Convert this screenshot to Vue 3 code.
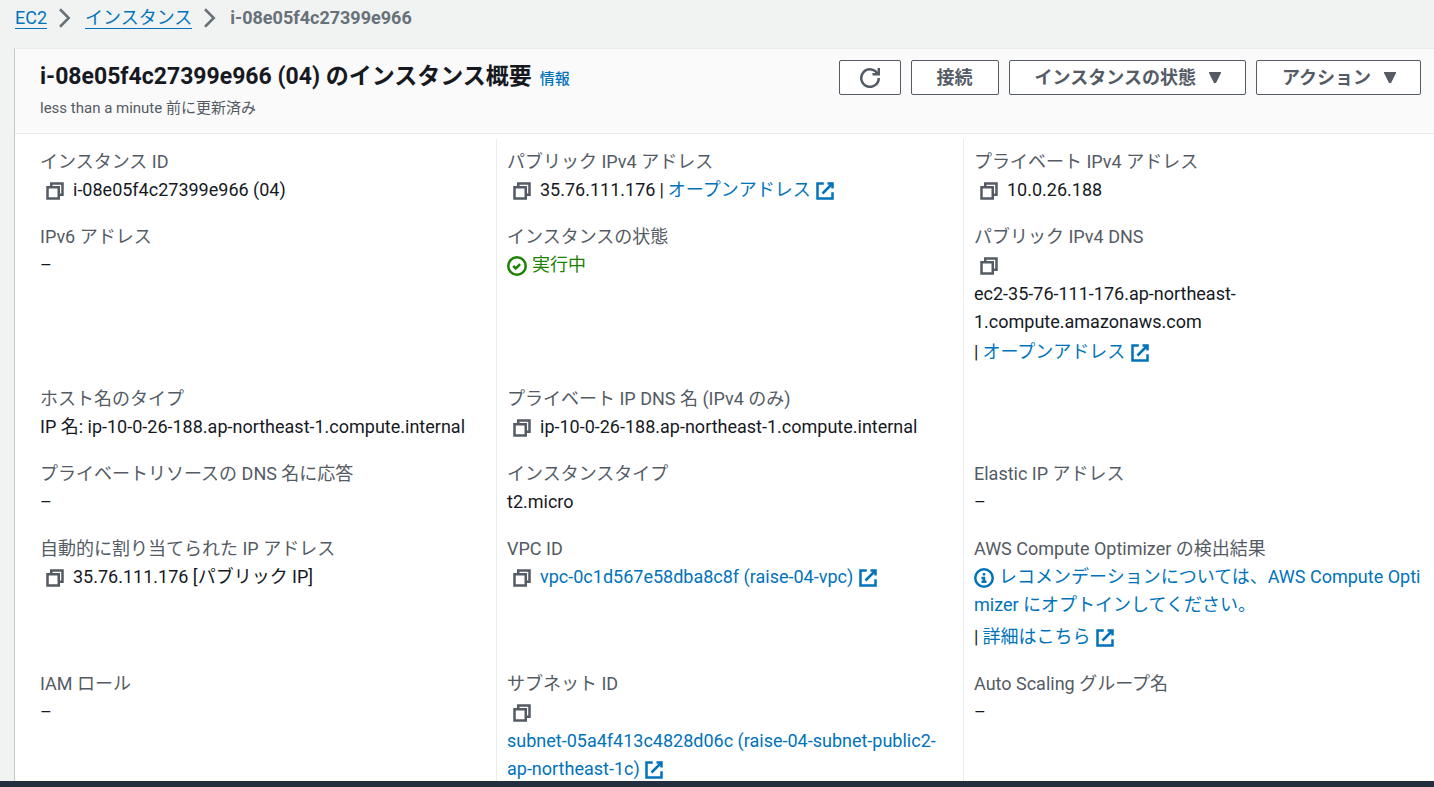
<script setup>
import { h } from 'vue'

const shapes = {
  copy: ['M2 5h9v9H2z', 'M5 5V2h9v9h-3'],
  external: ['M10 2h4v4', 'M6 10l8-8', 'M14 9.05V14H2V2h5'],
  check: ['M8 1a7 7 0 1 1 0 14A7 7 0 0 1 8 1z', 'M5 8l2 2 3.5-3.5'],
  info: ['M8 1a7 7 0 1 1 0 14A7 7 0 0 1 8 1z', 'M8 11V8H6', 'M10 11H6', 'M8 6V4'],
  refresh: ['M10 5h5V0', 'M15 8a7 7 0 1 1-.7-3'],
  chevron: ['M4 1l7 7-7 7'],
}

const Icon = (props) =>
  h(
    'svg',
    { viewBox: '0 0 16 16', width: 20, height: 20, 'aria-hidden': 'true', fill: 'none', stroke: 'currentColor', 'stroke-width': 2 },
    shapes[props.name].map((d) => h('path', { d })),
  )
Icon.props = ['name']

const fields = [
  { label: 'インスタンス ID', copy: true, text: 'i-08e05f4c27399e966 (04)' },
  { label: 'パブリック IPv4 アドレス', copy: true, text: '35.76.111.176', bar: true, link: 'オープンアドレス' },
  { label: 'プライベート IPv4 アドレス', copy: true, text: '10.0.26.188' },

  { label: 'IPv6 アドレス', text: '–' },
  { label: 'インスタンスの状態', status: '実行中' },
  {
    label: 'パブリック IPv4 DNS',
    copy: true,
    stacked: true,
    lines: ['ec2-35-76-111-176.ap-northeast-', '1.compute.amazonaws.com'],
    more: 'オープンアドレス',
  },

  { label: 'ホスト名のタイプ', text: 'IP 名: ip-10-0-26-188.ap-northeast-1.compute.internal' },
  { label: 'プライベート IP DNS 名 (IPv4 のみ)', copy: true, text: 'ip-10-0-26-188.ap-northeast-1.compute.internal' },
  {},

  { label: 'プライベートリソースの DNS 名に応答', text: '–' },
  { label: 'インスタンスタイプ', text: 't2.micro' },
  { label: 'Elastic IP アドレス', text: '–' },

  { label: '自動的に割り当てられた IP アドレス', copy: true, text: '35.76.111.176 [パブリック IP]' },
  { label: 'VPC ID', copy: true, link: 'vpc-0c1d567e58dba8c8f (raise-04-vpc)' },
  {
    label: 'AWS Compute Optimizer の検出結果',
    notice: ['レコメンデーションについては、AWS Compute Opti', 'mizer にオプトインしてください。'],
    more: '詳細はこちら',
  },

  { label: 'IAM ロール', text: '–' },
  {
    label: 'サブネット ID',
    copy: true,
    stacked: true,
    linkLines: ['subnet-05a4f413c4828d06c (raise-04-subnet-public2-', 'ap-northeast-1c)'],
  },
  { label: 'Auto Scaling グループ名', text: '–' },
]
</script>

<template>
  <div class="page">
    <nav class="crumbs" aria-label="パンくずリスト">
      <a href="#">EC2</a>
      <Icon name="chevron" class="sep" />
      <a href="#">インスタンス</a>
      <Icon name="chevron" class="sep" />
      <span class="current">i-08e05f4c27399e966</span>
    </nav>

    <main class="panel">
      <header class="head">
        <div>
          <div class="title">
            <h1>i-08e05f4c27399e966 (04) のインスタンス概要</h1>
            <a href="#" class="hint">情報</a>
          </div>
          <p class="updated">less than a minute 前に更新済み</p>
        </div>
        <div class="actions">
          <button type="button" class="icon-only" aria-label="更新"><Icon name="refresh" /></button>
          <button type="button">接続</button>
          <button type="button" class="menu">
            インスタンスの状態
            <svg class="caret" viewBox="0 0 12 12" aria-hidden="true"><path d="M0 0h12v1L7 11H5L0 1z" /></svg>
          </button>
          <button type="button" class="menu">
            アクション
            <svg class="caret" viewBox="0 0 12 12" aria-hidden="true"><path d="M0 0h12v1L7 11H5L0 1z" /></svg>
          </button>
        </div>
      </header>

      <dl class="grid">
        <div v-for="(f, i) in fields" :key="i" class="cell">
          <dt v-if="f.label">{{ f.label }}</dt>
          <dd v-if="f.label">
            <div class="line" :class="{ stacked: f.stacked, notice: f.notice }">
              <button v-if="f.copy" type="button" class="copy" aria-label="コピー"><Icon name="copy" /></button>
              <span v-if="f.text">{{ f.text }}</span>
              <span v-if="f.bar" class="bar">|</span>
              <a v-if="f.link" href="#">{{ f.link }} <Icon name="external" class="ext" /></a>
              <span v-if="f.status" class="status"><Icon name="check" class="mark" />{{ f.status }}</span>
              <a v-if="f.notice" href="#"><Icon name="info" class="mark" />{{ f.notice[0] }}<br />{{ f.notice[1] }}</a>
            </div>
            <div v-for="t in f.lines" :key="t" class="line">{{ t }}</div>
            <div v-if="f.linkLines" class="line">
              <a href="#">{{ f.linkLines[0] }}<br />{{ f.linkLines[1] }} <Icon name="external" class="ext" /></a>
            </div>
            <div v-if="f.more" class="line more">
              <span class="bar">|</span>
              <a href="#">{{ f.more }} <Icon name="external" class="ext" /></a>
            </div>
          </dd>
        </div>
      </dl>
    </main>

    <footer class="footer"></footer>
  </div>
</template>

<style>
body {
  margin: 0;
  background: #f2f3f3;
}
</style>

<style scoped>
.page {
  display: flex;
  flex-direction: column;
  height: 100vh;
  overflow: hidden;
  background: #f1f3f3;
  color: #16191f;
  font-family: Roboto, "Noto Sans CJK JP", sans-serif;
  font-size: 18px;
  line-height: 28px;
}

a {
  color: #0073bb;
  text-decoration: none;
}

.crumbs {
  flex: none;
  display: flex;
  align-items: center;
  height: 48px;
  padding: 0 15px 12px;
  box-sizing: border-box;
}

.crumbs a {
  line-height: 20px;
  border-bottom: 1px solid #0073bb;
}

.sep {
  flex: none;
  margin: 0 10px 0 8px;
  color: #687078;
}

.current {
  color: #687078;
  font-weight: 700;
}

.panel {
  flex: 1;
  min-height: 0;
  margin-left: 14px;
  overflow: hidden;
  background: #fff;
  border-top: 1px solid #eaeded;
  border-left: 1px solid #c3c7c8;
}

.head {
  display: flex;
  justify-content: space-between;
  padding: 11px 13px 13px 25px;
  background: #fafafa;
  border-bottom: 1px solid #eaeded;
}

.title {
  display: flex;
  align-items: baseline;
  gap: 8px;
}

h1 {
  margin: 0;
  font-size: 23px;
  line-height: 34px;
  font-weight: 700;
}

.hint {
  font-size: 15px;
  font-weight: 500;
}

.updated {
  margin: 2px 0 0;
  font-size: 15px;
  line-height: 24px;
  color: #545b64;
}

.actions {
  display: flex;
  align-items: flex-start;
  gap: 10px;
}

.actions button {
  display: flex;
  align-items: center;
  justify-content: center;
  height: 35px;
  padding: 0 25px;
  background: #fff;
  border: 1px solid #545b64;
  border-radius: 2px;
  color: #545b64;
  font: inherit;
  font-size: 18px;
  font-weight: 700;
  white-space: nowrap;
}

.actions .icon-only {
  padding: 0 20px;
}

.actions .menu {
  padding: 0 24px 0 25px;
}

.caret {
  width: 12px;
  height: 12px;
  margin-left: 13px;
  fill: #545b64;
}

.grid {
  display: grid;
  grid-template-columns: repeat(3, minmax(0, 1fr));
  margin: 0;
  padding: 5px 4px 0 14px;
}

.cell {
  padding: 9px 0 10px 11px;
}

.cell:not(:nth-child(3n + 1)) {
  padding-left: 10px;
  border-left: 1px solid #eaeded;
}

dt {
  line-height: 28px;
  color: #545b64;
}

dd {
  margin: 0;
}

.line {
  min-height: 28px;
  white-space: nowrap;
}

.stacked {
  min-height: 29px;
}

.notice {
  padding-bottom: 2px;
}

.more {
  padding-top: 2px;
}

.copy {
  display: inline-block;
  height: 20px;
  margin: 0 8px 0 5px;
  padding: 0;
  border: 0;
  background: none;
  color: #545b64;
  vertical-align: -5px;
}

.copy svg {
  display: block;
}

.bar {
  margin: 0 4px;
}

.more .bar {
  margin-left: 0;
}

.ext {
  vertical-align: -5px;
}

.mark {
  margin-right: 5px;
  vertical-align: -5px;
}

.status {
  color: #1d8102;
}

.footer {
  flex: none;
  height: 6px;
  background: #232f3e;
}
</style>
